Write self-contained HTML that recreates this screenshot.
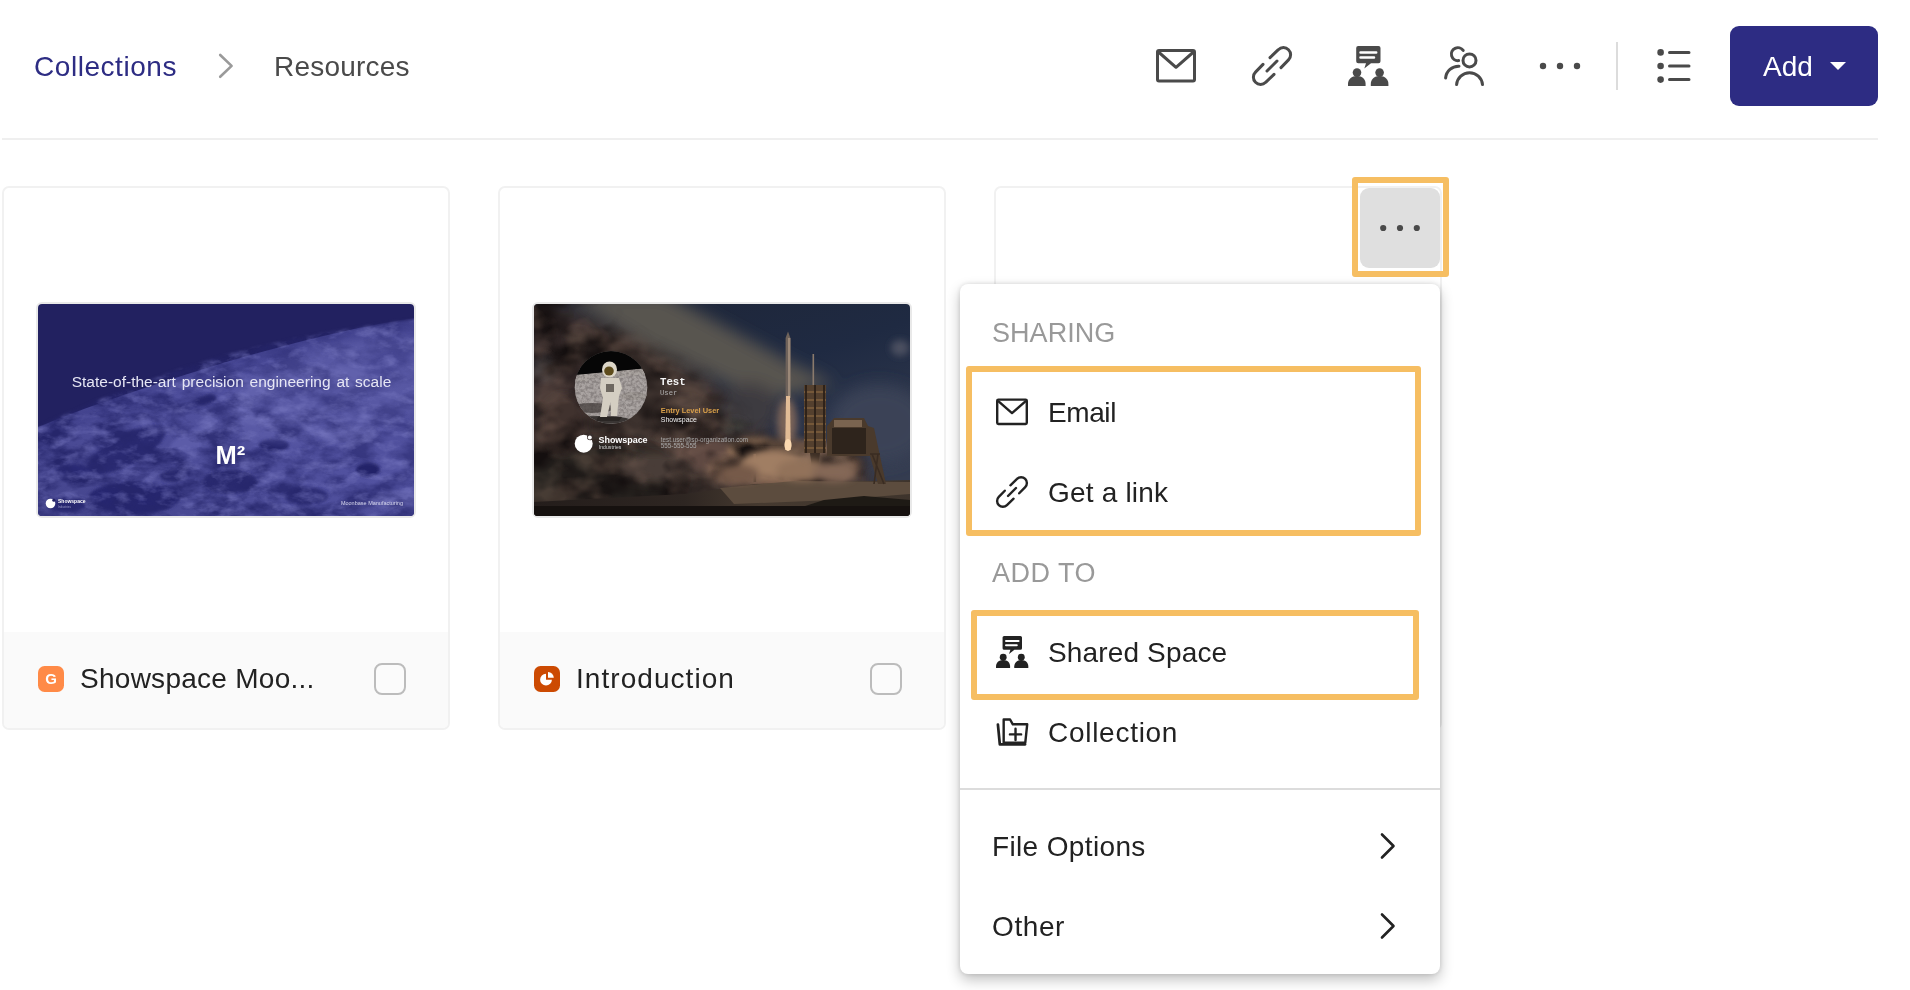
<!DOCTYPE html>
<html lang="en">
<head>
<meta charset="utf-8">
<title>Collections - Resources</title>
<style>
*{box-sizing:border-box;margin:0;padding:0}
html,body{width:1910px;height:990px;overflow:hidden;background:#fff}
body{position:relative;font-family:"Liberation Sans",sans-serif;color:#222;font-size:28px}
.abs{position:absolute}
svg.abs{overflow:visible}
.t{position:absolute;white-space:nowrap;line-height:34px;height:34px}
/* header */
#hline{left:2px;top:138px;width:1876px;height:2px;background:#efefef}
#vdiv{left:1616px;top:42px;width:2px;height:48px;background:#dcdcdc}
#add{left:1730px;top:26px;width:148px;height:80px;border-radius:9px;background:#2d2c83}
#add span{position:absolute;left:33px;top:24px;line-height:34px;color:#fff;font-size:28px}
#add i{position:absolute;left:100px;top:36px;width:0;height:0;border-left:8px solid transparent;border-right:8px solid transparent;border-top:8px solid #fff}
/* cards */
.card{position:absolute;top:186px;width:448px;height:544px;border:2px solid #f1f1f1;border-radius:7px;background:#fff;overflow:hidden}
.foot{position:absolute;left:0;right:0;top:444px;bottom:0;background:#fafafa}
.chk{position:absolute;left:370px;top:475px;width:32px;height:32px;border:2px solid #bcbcbc;border-radius:8px;background:#fbfbfb}
.fico{position:absolute;left:34px;top:478px;width:26px;height:26px;border-radius:6.5px}
.thumb{position:absolute;left:32px;top:114px;width:380px;height:216px;border:2px solid #e9e9e9;border-radius:6px;overflow:hidden}
.thumb svg{display:block}
/* dropdown */
#dd{left:960px;top:284px;width:480px;height:690px;background:#fff;border-radius:8px;box-shadow:0 6px 14px rgba(0,0,0,.24),0 0 5px rgba(0,0,0,.13)}
#ddline{left:960px;top:788px;width:480px;height:2px;background:#dcdcdc}
.hl{position:absolute;border:6px solid #f6be62;border-radius:3px}
.sec{color:#999;font-size:27px}
</style>
</head>
<body>
<div id="wrap" style="position:absolute;left:0;top:0;width:1910px;height:990px;overflow:hidden;will-change:transform">

<!-- header -->
<span class="t" id="t_col" style="left:34px;top:50px;color:#2d2c83;letter-spacing:0.55px">Collections</span>
<svg class="abs" style="left:214px;top:48px" width="24" height="34" viewBox="0 0 24 34"><path d="M6.2 7 L17.6 17.9 L6.2 28.8" fill="none" stroke="#9a9a9a" stroke-width="2.6" stroke-linecap="round" stroke-linejoin="round"/></svg>
<span class="t" id="t_res" style="left:274px;top:50px;color:#4a4a4a;letter-spacing:0.2px">Resources</span>

<!-- header icons -->
<svg class="abs" style="left:1156px;top:46px" width="40" height="40" viewBox="0 0 40 40"><rect x="1.5" y="4.5" width="37" height="30.5" rx="1.5" fill="none" stroke="#4a4a4a" stroke-width="3"/><path d="M2.5 6 L20 21.3 L37.5 6" fill="none" stroke="#4a4a4a" stroke-width="3" stroke-linejoin="round"/></svg>
<svg class="abs" style="left:1252px;top:46px" width="40" height="40" viewBox="0 0 40 40"><g fill="none" stroke="#4a4a4a" stroke-width="3" stroke-linecap="round"><path d="M18 11.6 L26.3 3.7 A7.2 7.2 0 0 1 36.5 13.9 L29 21.6"/><path d="M22 28.4 L13.7 36.3 A7.2 7.2 0 0 1 3.5 26.1 L11 18.4"/><path d="M15 25 L25 15"/></g></svg>
<svg class="abs" style="left:1348px;top:46px" width="40" height="40" viewBox="0 0 40 40"><g fill="#4a4a4a"><path d="M10.2 0 H30.5 A2 2 0 0 1 32.5 2 V15.3 A2 2 0 0 1 30.5 17.3 H23 L16.3 22.6 L18 17.3 H10.2 A2 2 0 0 1 8.2 15.3 V2 A2 2 0 0 1 10.2 0 Z"/><circle cx="9" cy="26.6" r="4.3"/><path d="M0 40 V38 C0 33.5 3.5 30 9 30 C14.5 30 17.6 33.5 17.6 38 V40 Z"/><circle cx="31.6" cy="26.6" r="4.3"/><path d="M22.8 40 V38 C22.8 33.5 26.3 30 31.6 30 C37 30 40.4 33.5 40.4 38 V40 Z"/></g><path d="M12.5 6.4 H28.2 M12.5 11.6 H26" stroke="#fff" stroke-width="2.5" stroke-linecap="round"/></svg>
<svg class="abs" style="left:1444px;top:46px" width="40" height="40" viewBox="0 0 40 40"><g fill="none" stroke="#4a4a4a" stroke-width="3" stroke-linecap="round"><circle cx="25.5" cy="14.4" r="6.5"/><path d="M12.6 38.6 A13 13 0 0 1 38.5 38.6"/><path d="M19.2 4.4 A6.5 6.5 0 1 0 14.6 14.6"/><path d="M1.6 32 A13 13 0 0 1 15 20.2"/></g></svg>
<svg class="abs" style="left:1536px;top:58px" width="48" height="16" viewBox="0 0 48 16"><circle cx="7" cy="8" r="3.2" fill="#4a4a4a"/><circle cx="24" cy="8" r="3.2" fill="#4a4a4a"/><circle cx="41" cy="8" r="3.2" fill="#4a4a4a"/></svg>
<svg class="abs" style="left:1654px;top:46px" width="40" height="40" viewBox="0 0 40 40"><g fill="#4a4a4a"><circle cx="6.6" cy="6.4" r="3.3"/><circle cx="6.6" cy="20" r="3.3"/><circle cx="6.6" cy="33.6" r="3.3"/></g><path d="M15.5 6.4 H35 M15.5 20 H35 M15.5 33.6 H35" stroke="#4a4a4a" stroke-width="3" stroke-linecap="round"/></svg>
<div class="abs" id="vdiv"></div>
<div class="abs" id="add"><span id="t_add">Add</span><i></i></div>
<div class="abs" id="hline"></div>

<!-- cards -->
<div class="card" style="left:2px" id="c1">
  <div class="thumb" id="th1">
<svg width="376" height="212" viewBox="0 0 376 212">
<defs>
<filter id="mtex" color-interpolation-filters="sRGB" x="0" y="0" width="100%" height="100%">
<feTurbulence type="fractalNoise" baseFrequency="0.03 0.055" numOctaves="5" seed="7" result="n"/>
<feColorMatrix in="n" type="matrix" values="0 0 0 0 0.15  0 0 0 0 0.15  0 0 0 0 0.42  3.0 0 0 0 -1.12"/>
</filter>
<filter id="mtex2" color-interpolation-filters="sRGB" x="0" y="0" width="100%" height="100%">
<feTurbulence type="fractalNoise" baseFrequency="0.05 0.09" numOctaves="4" seed="23" result="n"/>
<feColorMatrix in="n" type="matrix" values="0 0 0 0 0.50  0 0 0 0 0.50  0 0 0 0 0.78  0 2.8 0 0 -1.35"/>
</filter>
<filter id="b2"><feGaussianBlur stdDeviation="1.6"/></filter>
<filter id="b5"><feGaussianBlur stdDeviation="5"/></filter>
<filter id="b1h"><feGaussianBlur stdDeviation="1.8"/></filter><mask id="moonclip" maskUnits="userSpaceOnUse" x="0" y="0" width="376" height="212"><path d="M-10 127 C60 94 130 68 188 51 C250 34 320 22 386 14 V230 H-10 Z" fill="#fff" filter="url(#b1h)"/></mask>
<linearGradient id="tfg" x1="0" y1="1" x2="1" y2="0"><stop offset="0.25" stop-color="#fff"/><stop offset="0.8" stop-color="#555"/></linearGradient><mask id="texfade" maskUnits="userSpaceOnUse" x="0" y="0" width="376" height="212"><rect width="376" height="212" fill="url(#tfg)"/></mask><linearGradient id="mg" x1="0" y1="1" x2="1" y2="0"><stop offset="0" stop-color="#44448c"/><stop offset="0.55" stop-color="#5252a0"/><stop offset="1" stop-color="#4a4a96"/></linearGradient>
</defs>
<rect width="376" height="212" fill="#222160"/>
<g mask="url(#moonclip)">
<path d="M0 123 C60 98 130 76 188 58 C250 40 320 22 376 14 V212 H0 Z" fill="url(#mg)"/>
<path d="M0 116 C60 92 130 70 188 52 C250 34 320 16 376 8 V26 C320 36 250 54 188 72 C130 90 60 112 0 138 Z" fill="#2b2b74" opacity="0.25" filter="url(#b5)"/>
<g filter="url(#b2)">
<ellipse cx="262" cy="92" rx="70" ry="26" fill="#6464ae" transform="rotate(-14 262 92)"/>
<ellipse cx="262" cy="95" rx="50" ry="15" fill="#4c4c98" transform="rotate(-14 262 95)"/>
<ellipse cx="170" cy="130" rx="40" ry="10" fill="#5c5ca8" transform="rotate(-20 170 130)"/>
<ellipse cx="88" cy="146" rx="44" ry="15" fill="#2a2a72" transform="rotate(-28 88 146)"/>
<ellipse cx="96" cy="194" rx="46" ry="16" fill="#282870"/>
<ellipse cx="236" cy="141" rx="15" ry="6.500" fill="#242468"/>
<ellipse cx="168" cy="96" rx="11" ry="4.500" fill="#27276c" transform="rotate(-15 168 96)"/>
<ellipse cx="330" cy="166" rx="12" ry="7" fill="#242468"/>
<ellipse cx="192" cy="178" rx="27" ry="12" fill="#29296f"/>
<ellipse cx="134" cy="172" rx="12" ry="6" fill="#29296f"/>
<ellipse cx="268" cy="192" rx="22" ry="9" fill="#2d2d76"/>
<ellipse cx="36" cy="168" rx="18" ry="8" fill="#2c2c75"/>
<ellipse cx="28" cy="200" rx="20" ry="8" fill="#2c2c75"/>
<ellipse cx="350" cy="58" rx="24" ry="10" fill="#363682" transform="rotate(-20 350 58)"/>
<ellipse cx="310" cy="130" rx="30" ry="9" fill="#6060aa"/>
<ellipse cx="356" cy="196" rx="24" ry="10" fill="#5a5aa4"/>
</g>
<ellipse cx="300" cy="86" rx="120" ry="46" fill="#6262ac" opacity="0.55" filter="url(#b5)" transform="rotate(-14 300 86)"/><g mask="url(#texfade)"><rect width="376" height="212" filter="url(#mtex)"/></g>
<rect width="376" height="212" filter="url(#mtex2)" opacity="0.5"/>
</g>
<text x="193.500" y="83" text-anchor="middle" font-family="Liberation Sans, sans-serif" font-size="15.500" word-spacing="1.500" fill="#e6e6f4">State-of-the-art precision engineering at scale</text>
<text x="177.500" y="159.500" font-family="Liberation Sans, sans-serif" font-size="25.500" font-weight="bold" fill="#ffffff">M²</text>
<circle cx="12.500" cy="199.500" r="4.800" fill="#fff"/><circle cx="15.900" cy="196.200" r="1.600" fill="#222160"/>
<text x="20" y="199" font-family="Liberation Sans, sans-serif" font-size="5" font-weight="bold" fill="#fff">Showspace</text>
<text x="20" y="203.500" font-family="Liberation Sans, sans-serif" font-size="3" fill="#9a9ac8">Industries</text>
<text x="365" y="201" text-anchor="end" font-family="Liberation Sans, sans-serif" font-size="5.500" fill="#d8d8ee">Moonbase Manufacturing</text>
</svg>
</div>
  <div class="foot"></div>
  <div class="fico" style="background:#ff8a47"><span style="position:absolute;left:0;width:26px;top:4px;line-height:18px;text-align:center;font-size:15px;font-weight:bold;color:#fff">G</span></div>
  <div class="chk"></div>
</div>
<div class="card" style="left:498px" id="c2">
  <div class="thumb" id="th2">
<svg width="376" height="212" viewBox="0 0 376 212">
<defs>
<filter id="c4"><feGaussianBlur stdDeviation="3.5"/></filter>
<filter id="c8"><feGaussianBlur stdDeviation="8"/></filter>
<filter id="c2"><feGaussianBlur stdDeviation="0.9"/></filter>
<filter id="c1"><feGaussianBlur stdDeviation="0.5"/></filter>
<filter id="ctex" color-interpolation-filters="sRGB" x="0" y="0" width="100%" height="100%">
<feTurbulence type="fractalNoise" baseFrequency="0.022 0.03" numOctaves="3" seed="11" result="n"/>
<feColorMatrix in="n" type="matrix" values="0 0 0 0 0.08  0 0 0 0 0.06  0 0 0 0 0.06  2.6 0 0 0 -1.0"/>
</filter>
<filter id="ctex2" color-interpolation-filters="sRGB" x="0" y="0" width="100%" height="100%">
<feTurbulence type="fractalNoise" baseFrequency="0.03 0.04" numOctaves="3" seed="3" result="n"/>
<feColorMatrix in="n" type="matrix" values="0 0 0 0 0.55  0 0 0 0 0.44  0 0 0 0 0.38  0 3 0 0 -1.3"/>
</filter>
<filter id="gtex" color-interpolation-filters="sRGB" x="0" y="0" width="100%" height="100%">
<feTurbulence type="fractalNoise" baseFrequency="0.35" numOctaves="3" seed="5" result="n"/>
<feColorMatrix in="n" type="matrix" values="0 0 0 0 0.25  0 0 0 0 0.22  0 0 0 0 0.22  3 0 0 0 -1.1"/>
</filter>
<linearGradient id="sky" x1="0" y1="0" x2="0.6" y2="1"><stop offset="0" stop-color="#1e2536"/><stop offset="0.5" stop-color="#1f2a42"/><stop offset="1" stop-color="#343c50"/></linearGradient>
<clipPath id="av"><circle cx="77" cy="83.500" r="36.300"/></clipPath>
<mask id="cloudmask" maskUnits="userSpaceOnUse" x="0" y="0" width="376" height="212"><path d="M-20 -20 H20 L100 34 L170 76 L212 120 L250 142 L330 150 V240 H-20 Z" fill="#fff" filter="url(#c8)"/></mask>
</defs>
<rect width="376" height="212" fill="url(#sky)"/>
<g filter="url(#c8)">
<path d="M28 -10 L130 -10 L260 60 L300 80 L230 96 L120 44 Z" fill="#58554f"/>
<ellipse cx="345" cy="120" rx="50" ry="40" fill="#3a4256"/>
<path d="M-10 -5 L40 6 L100 34 L170 72 L215 110 L240 140 L330 150 L340 190 L-10 220 Z" fill="#3c312e"/><ellipse cx="215" cy="105" rx="30" ry="26" fill="#3c3a40"/>
<ellipse cx="30" cy="60" rx="45" ry="50" fill="#352c2c"/>
<ellipse cx="60" cy="175" rx="90" ry="40" fill="#2c2524"/>
</g>
<g filter="url(#c4)">
<ellipse cx="55" cy="45" rx="26" ry="14" fill="#4a3c38" transform="rotate(35 55 45)"/>
<ellipse cx="150" cy="110" rx="26" ry="16" fill="#54443e"/>
<ellipse cx="170" cy="150" rx="30" ry="18" fill="#5e4a42"/>
<ellipse cx="120" cy="165" rx="40" ry="16" fill="#4a3c38"/>
<ellipse cx="30" cy="120" rx="24" ry="30" fill="#40332f"/>
<ellipse cx="256" cy="160" rx="70" ry="24" fill="#806250"/><ellipse cx="250" cy="156" rx="30" ry="16" fill="#977860"/>
<ellipse cx="222" cy="150" rx="28" ry="17" fill="#97765c"/>
<ellipse cx="288" cy="160" rx="30" ry="16" fill="#8c705c"/>
<ellipse cx="196" cy="166" rx="24" ry="14" fill="#7a5e50"/>
<ellipse cx="253" cy="118" rx="10" ry="24" fill="#7a6458"/>
<ellipse cx="10" cy="64" rx="12" ry="12" fill="#4a4a50"/>
<ellipse cx="366" cy="44" rx="9" ry="8" fill="#4c5060"/>
<ellipse cx="200" cy="122" rx="12" ry="6" fill="#4a4844"/>
</g>
<g mask="url(#cloudmask)"><rect width="376" height="212" filter="url(#ctex)"/></g>
<g mask="url(#cloudmask)" opacity="0.3"><rect width="376" height="212" filter="url(#ctex2)"/></g>
<!-- ground -->
<linearGradient id="gnd" x1="0" y1="0" x2="1" y2="0"><stop offset="0" stop-color="#241d1b"/><stop offset="0.4" stop-color="#2e2622"/><stop offset="0.6" stop-color="#463a30"/><stop offset="1" stop-color="#3e342c"/></linearGradient><path d="M0 198 L150 190 L220 180 L376 176 V212 H0 Z" fill="url(#gnd)"/>
<path d="M186 184 L260 177 L376 178 V190 L300 196 L200 200 Z" fill="#5c4c3e" filter="url(#c2)"/>
<path d="M240 212 L290 196 L330 192 L376 196 V212 Z" fill="#1e1a15" filter="url(#c2)"/>

<rect x="0" y="202" width="376" height="10" fill="#16110f" filter="url(#c2)"/>
<!-- structures -->
<g filter="url(#c1)">
<rect x="278.500" y="50" width="1.600" height="32" fill="#8a7a6c"/>
<rect x="270" y="81" width="22" height="68" fill="#54402e"/>
<path d="M270 88 H292 M270 96 H292 M270 104 H292 M270 112 H292 M270 120 H292 M270 128 H292 M270 136 H292 M270 144 H292" stroke="#80603e" stroke-width="1.600"/>
<path d="M272 81 V149 M281 81 V149 M290 81 V149" stroke="#2c2018" stroke-width="1.800"/>
<path d="M276 149 H286 L284 165 H278 Z" fill="#3c2e24"/>
<path d="M293 122 L300 114 H330 L334 122 L340 124 L352 180 H344 L336 152 H293 Z" fill="#4a3a2c"/>
<path d="M298 124 H332 V150 H298 Z" fill="#2e241c"/>
<path d="M300 116 H328 V123 H300 Z" fill="#7a6450"/>
<path d="M338 150 L350 180 M344 150 L340 180 M336 150 H346" stroke="#3a2c22" stroke-width="1.600" fill="none"/>
<path d="M251.600 34 L254 27.500 L256.400 34 V94 H251.600 Z" fill="#6e625a"/>
<rect x="254" y="34" width="2.400" height="60" fill="#9a8878"/>
<path d="M252 92 H256 L256.800 146 H251.200 Z" fill="#e2bc96"/>
<rect x="219.500" y="150" width="2.600" height="28" fill="#5a4638"/>
</g>
<g filter="url(#c4)">
<ellipse cx="236" cy="160" rx="30" ry="14" fill="#a07e64"/>
<ellipse cx="268" cy="166" rx="26" ry="11" fill="#92725a"/>
<ellipse cx="300" cy="168" rx="22" ry="10" fill="#846856"/>
<ellipse cx="205" cy="170" rx="20" ry="10" fill="#765a4a"/>
</g>
<ellipse cx="254" cy="141" rx="3.600" ry="6" fill="#fbd9b0" filter="url(#c2)"/>
<!-- avatar -->
<g clip-path="url(#av)">
<rect x="40" y="46" width="74" height="76" fill="#aaa4a2"/>
<path d="M40 46 H114 V64 L40 71 Z" fill="#060606"/>
<path d="M40 71 L114 64 V70 L40 78 Z" fill="#aaa4a0"/>
<ellipse cx="58" cy="104" rx="22" ry="5" fill="#5e5856"/>
<ellipse cx="100" cy="92" rx="14" ry="4" fill="#a09a96"/>
<ellipse cx="66" cy="116" rx="30" ry="4" fill="#3a3634"/>
<rect x="40" y="46" width="74" height="76" filter="url(#gtex)" opacity="0.3"/>
<path d="M40 46 H114 V64 L40 71 Z" fill="#060606"/>
<g filter="url(#c1)">
<ellipse cx="75.500" cy="65.500" rx="7.500" ry="8" fill="#dcd6c8"/>
<ellipse cx="75" cy="67" rx="4.800" ry="4.500" fill="#5e4c1c"/>
<path d="M67 74 H85 L88 84 L85 92 L83 112 H77 L76.500 98 L73 113 H66 L69 94 L66 84 Z" fill="#d4cec2"/>
<rect x="72" y="80" width="8" height="8" fill="#6e6860"/>
<path d="M64 113 H88 L85 117 H62 Z" fill="#2a2624"/>
</g>
</g>
<!-- logo -->
<circle cx="49.700" cy="139.700" r="9" fill="#fff"/><circle cx="56.300" cy="133" r="3.300" fill="#3a302e"/><circle cx="55.800" cy="133.600" r="2" fill="#fff"/>
<text x="64.500" y="138.800" font-family="Liberation Sans, sans-serif" font-size="9" font-weight="bold" fill="#fff" letter-spacing="-0.050">Showspace</text>
<text x="64.700" y="145.300" font-family="Liberation Sans, sans-serif" font-size="5" fill="#dcdcdc" letter-spacing="0.100">Industries</text>
<text x="126" y="81.400" font-family="Liberation Mono, monospace" font-size="10.700" font-weight="bold" fill="#f4f4f4">Test</text>
<text x="126" y="90.600" font-family="Liberation Mono, monospace" font-size="7.200" fill="#b0b0b0">User</text>
<text x="126.800" y="109.300" font-family="Liberation Sans, sans-serif" font-size="7.400" fill="#d9a04a" font-weight="bold">Entry Level User</text>
<text x="126.800" y="118.300" font-family="Liberation Sans, sans-serif" font-size="7" fill="#f0f0f0">Showspace</text>
<text x="126.800" y="137.500" font-family="Liberation Sans, sans-serif" font-size="6.300" fill="#a8a8a8">test.user@sp-organization.com</text>
<text x="126.800" y="144" font-family="Liberation Sans, sans-serif" font-size="6.300" fill="#a8a8a8">555-555-555</text>
</svg>
</div>
  <div class="foot"></div>
  <div class="fico" style="background:#cc4a02"><svg width="26" height="26" viewBox="0 0 26 26" style="position:absolute;left:0;top:0"><path d="M12 7.800 A5.900 5.900 0 1 0 17.900 13.700 H12 Z" fill="#fff"/><path d="M14 6 A5.800 5.800 0 0 1 19.800 11.800 H14 Z" fill="#fff"/></svg></div>
  <div class="chk"></div>
</div>
<div class="card" style="left:994px" id="c3"></div>

<span class="t" id="t_c1" style="left:80px;top:662px;letter-spacing:0.27px">Showspace Moo...</span>
<span class="t" id="t_c2" style="left:576px;top:662px;letter-spacing:1.05px">Introduction</span>

<!-- more button -->
<div class="abs" style="left:1360px;top:188px;width:80px;height:80px;border-radius:9px;background:#dfdfdf"></div>
<!-- card more dots -->
<svg class="abs" style="left:1376px;top:220px" width="48" height="16" viewBox="0 0 48 16"><circle cx="7.2" cy="8" r="3.1" fill="#4a4a4a"/><circle cx="24" cy="8" r="3.1" fill="#4a4a4a"/><circle cx="40.8" cy="8" r="3.1" fill="#4a4a4a"/></svg>
<div class="hl" style="left:1352px;top:177px;width:97px;height:100px"></div>

<!-- dropdown -->
<div class="abs" id="dd"></div>
<div class="abs" id="ddline"></div>
<span class="t sec" id="t_sh" style="left:992px;top:316px;letter-spacing:0.05px">SHARING</span>
<span class="t" id="t_em" style="left:1048px;top:396px;letter-spacing:-0.4px">Email</span>
<span class="t" id="t_gl" style="left:1048px;top:476px;letter-spacing:0.19px">Get a link</span>
<span class="t sec" id="t_at" style="left:992px;top:556px;letter-spacing:0.5px">ADD TO</span>
<span class="t" id="t_ss" style="left:1048px;top:636px;letter-spacing:0.15px">Shared Space</span>
<span class="t" id="t_cl" style="left:1048px;top:716px;letter-spacing:0.72px">Collection</span>
<span class="t" id="t_fo" style="left:992px;top:830px;letter-spacing:0.36px">File Options</span>
<span class="t" id="t_ot" style="left:992px;top:910px;letter-spacing:0.6px">Other</span>
<!-- dropdown icons -->
<svg class="abs" style="left:996px;top:396px" width="32" height="32" viewBox="0 0 40 40"><rect x="1.5" y="4.5" width="37" height="30.5" rx="1.5" fill="none" stroke="#222" stroke-width="3"/><path d="M2.5 6 L20 21.3 L37.5 6" fill="none" stroke="#222" stroke-width="3" stroke-linejoin="round"/></svg>
<svg class="abs" style="left:996px;top:476px" width="32" height="32" viewBox="0 0 40 40"><g fill="none" stroke="#222" stroke-width="3" stroke-linecap="round"><path d="M18 11.6 L26.3 3.7 A7.2 7.2 0 0 1 36.5 13.9 L29 21.6"/><path d="M22 28.4 L13.7 36.3 A7.2 7.2 0 0 1 3.5 26.1 L11 18.4"/><path d="M15 25 L25 15"/></g></svg>
<svg class="abs" style="left:996px;top:636px" width="32" height="32" viewBox="0 0 40 40"><g fill="#222"><path d="M10.2 0 H30.5 A2 2 0 0 1 32.5 2 V15.3 A2 2 0 0 1 30.5 17.3 H23 L16.3 22.6 L18 17.3 H10.2 A2 2 0 0 1 8.2 15.3 V2 A2 2 0 0 1 10.2 0 Z"/><circle cx="9" cy="26.6" r="4.3"/><path d="M0 40 V38 C0 33.5 3.5 30 9 30 C14.5 30 17.6 33.5 17.6 38 V40 Z"/><circle cx="31.6" cy="26.6" r="4.3"/><path d="M22.8 40 V38 C22.8 33.5 26.3 30 31.6 30 C37 30 40.4 33.5 40.4 38 V40 Z"/></g><path d="M12.5 6.4 H28.2 M12.5 11.6 H26" stroke="#fff" stroke-width="2.5" stroke-linecap="round"/></svg>
<svg class="abs" style="left:996px;top:716px" width="32" height="32" viewBox="0 0 40 40"><g fill="none" stroke="#222" stroke-width="3" stroke-linejoin="round" stroke-linecap="round"><path d="M9.6 4.4 H17.6 L21 10.4 H39 L36.6 33.4 H9.6 Z"/><path d="M2.4 10.8 L4.8 35.4 H36.4" stroke-width="3.4"/><path d="M17.4 23 H31.4 M24.4 16 V30"/></g></svg>
<svg class="abs" style="left:1376px;top:830px" width="24" height="32" viewBox="0 0 24 32"><path d="M6 4.5 L17.5 16 L6 27.5" fill="none" stroke="#222" stroke-width="2.6" stroke-linecap="round" stroke-linejoin="round"/></svg>
<svg class="abs" style="left:1376px;top:910px" width="24" height="32" viewBox="0 0 24 32"><path d="M6 4.5 L17.5 16 L6 27.5" fill="none" stroke="#222" stroke-width="2.6" stroke-linecap="round" stroke-linejoin="round"/></svg>
<div class="hl" style="left:966px;top:366px;width:455px;height:170px"></div>
<div class="hl" style="left:971px;top:610px;width:448px;height:90px"></div>

</div>
</body>
</html>
